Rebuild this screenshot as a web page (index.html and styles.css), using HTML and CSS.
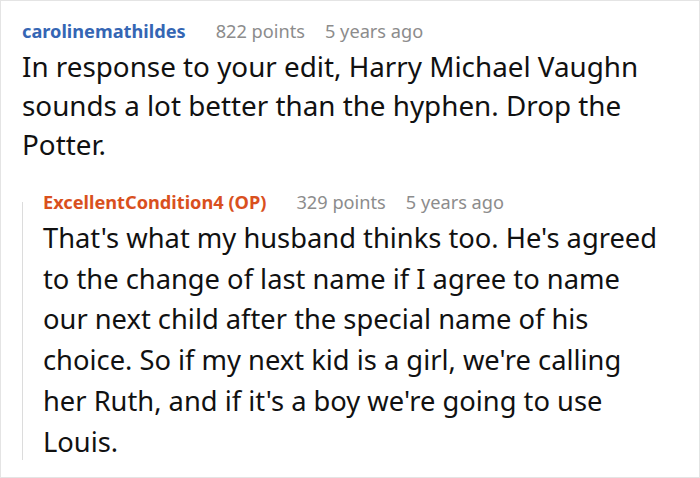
FILE: index.html
```html
<!DOCTYPE html>
<html>
<head>
<meta charset="utf-8">
<link rel="stylesheet" href="styles.css">
</head>
<body>
<div class="card">
  <div class="comment">
    <div class="meta">
      <span class="author">carolinemathildes</span>
      <span class="info">822 points</span>
      <span class="info">5 years ago</span>
    </div>
    <p class="text">In response to your edit, Harry Michael Vaughn sounds a lot better than the hyphen. Drop the Potter.</p>
  </div>
  <div class="reply">
    <div class="thread-line"></div>
    <div class="reply-body">
      <div class="meta">
        <span class="author op">ExcellentCondition4 (OP)</span>
        <span class="info">329 points</span>
        <span class="info">5 years ago</span>
      </div>
      <p class="text reply-text">That's what my husband thinks too. He's agreed to the change of last name if I agree to name our next child after the special name of his choice. So if my next kid is a girl, we're calling her Ruth, and if it's a boy we're going to use Louis.</p>
    </div>
  </div>
</div>
</body>
</html>
```
FILE: styles.css
```css
html, body {
  margin: 0;
  padding: 0;
  background: #ffffff;
}
.card {
  box-sizing: border-box;
  width: 700px;
  height: 478px;
  border: 1px solid #e4e4e4;
  padding: 18px 34px 0 21px;
  font-family: "Noto Sans", "Open Sans", sans-serif;
  color: #111111;
  overflow: hidden;
}
.meta {
  display: flex;
  gap: 20px;
  font-size: 18.2px;
  line-height: 24px;
  height: 24px;
  white-space: nowrap;
}
.author {
  font-weight: 700;
  color: #3566b4;
  margin-right: 10px;
}
.author.op {
  color: #d9501e;
}
.info {
  color: #8c8c8c;
}
.text {
  margin: 4px 0 0 0;
  font-size: 27.8px;
  line-height: 39px;
}
.reply {
  display: flex;
  margin-top: 26px;
}
.thread-line {
  width: 1px;
  background: #dcdcdc;
  margin-top: 12px;
  margin-bottom: 2px;
  flex-shrink: 0;
}
.reply-body {
  padding-left: 20px;
  flex: 1;
}
.reply-text {
  margin-top: 4px;
  font-size: 27.3px;
  line-height: 40.7px;
}
```
